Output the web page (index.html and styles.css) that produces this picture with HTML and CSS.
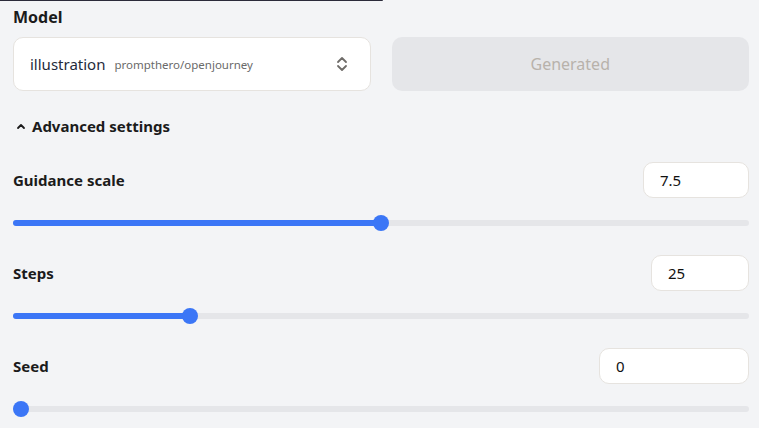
FILE: index.html
```html
<html>

<head>
    <link rel="stylesheet" href="styles.css">
</head>

<body>
    <div class="topEdge"></div>
    <div class="panel">
        <div class="label modelLabel">Model</div>
        <div class="modelRow">
            <div class="modelSelect">
                <span class="modelName">illustration</span>
                <span class="modelRepo">prompthero/openjourney</span>
                <svg class="updown" width="12" height="18" viewBox="0 0 12 18">
                    <path d="M2 7 L6 3 L10 7" fill="none" stroke="#6f6c69" stroke-width="1.8" stroke-linecap="round" stroke-linejoin="round"/>
                    <path d="M2 11 L6 15 L10 11" fill="none" stroke="#6f6c69" stroke-width="1.8" stroke-linecap="round" stroke-linejoin="round"/>
                </svg>
            </div>
            <button class="generateButton" disabled>Generated</button>
        </div>

        <div class="advanced">
            <svg class="caret" width="10" height="8" viewBox="0 0 10 8">
                <path d="M2 6 L5 3 L8 6" fill="none" stroke="#1b1b1b" stroke-width="1.8" stroke-linecap="round" stroke-linejoin="round"/>
            </svg>
            <span>Advanced settings</span>
        </div>

        <div class="setting">
            <div class="settingHead">
                <div class="label">Guidance scale</div>
                <div class="numberBox guidanceBox">7.5</div>
            </div>
            <div class="slider">
                <div class="track"></div>
                <div class="fill" style="width: 368px;"></div>
                <div class="thumb" style="left: 360px;"></div>
            </div>
        </div>

        <div class="setting">
            <div class="settingHead">
                <div class="label">Steps</div>
                <div class="numberBox stepsBox">25</div>
            </div>
            <div class="slider">
                <div class="track"></div>
                <div class="fill" style="width: 177px;"></div>
                <div class="thumb" style="left: 169px;"></div>
            </div>
        </div>

        <div class="setting">
            <div class="settingHead">
                <div class="label">Seed</div>
                <div class="numberBox seedBox">0</div>
            </div>
            <div class="slider">
                <div class="track"></div>
                <div class="thumb" style="left: 0px;"></div>
            </div>
        </div>
    </div>
</body>
</html>
```

FILE: styles.css
```css
body {
    margin: 0;
    background-color: #f3f4f6;
    font-family: "Noto Sans", "Open Sans", sans-serif;
    color: #1b1b1b;
}

.topEdge {
    height: 1px;
    width: 383px;
    background-color: #2b2b3a;
    border-bottom-right-radius: 2px;
}

.panel {
    padding: 0 10px 0 13px;
}

.label {
    font-size: 15px;
    font-weight: 700;
    line-height: 22px;
}

.modelLabel {
    margin-top: 4px;
    font-size: 16px;
    line-height: 24px;
}

.modelRow {
    display: grid;
    grid-template-columns: 1fr 1fr;
    gap: 21px;
    margin-top: 8px;
}

.modelSelect {
    min-width: 0;
    height: 52px;
    display: flex;
    align-items: center;
    padding: 0 22px 0 16px;
    background-color: #ffffff;
    border: 1px solid #e6e3df;
    border-radius: 10px;
}

.modelName {
    font-size: 15px;
    color: #1f2b3b;
}

.modelRepo {
    margin-left: 9px;
    font-size: 11.5px;
    color: #6a6a6a;
}

.updown {
    margin-left: auto;
}

.generateButton {
    min-width: 0;
    height: 54px;
    border: none;
    border-radius: 10px;
    background-color: #e5e6e9;
    color: #b8b2ab;
    font-family: "Noto Sans", "Open Sans", sans-serif;
    font-size: 16px;
}

.advanced {
    display: flex;
    align-items: center;
    gap: 6px;
    margin-top: 23px;
    padding-left: 3px;
    font-size: 15px;
    font-weight: 700;
    line-height: 24px;
}

.setting {
    margin-top: 24px;
}

.setting:first-of-type {
    margin-top: 25px;
}

.settingHead {
    display: flex;
    justify-content: space-between;
    align-items: center;
}

.numberBox {
    box-sizing: border-box;
    height: 36px;
    line-height: 34px;
    padding-left: 16px;
    background-color: #ffffff;
    border: 1px solid #e6e3df;
    border-radius: 10px;
    font-size: 15px;
    color: #111111;
}

.guidanceBox {
    width: 106px;
}

.stepsBox {
    width: 98px;
}

.seedBox {
    width: 150px;
}

.slider {
    position: relative;
    height: 16px;
    margin-top: 17px;
}

.track {
    position: absolute;
    top: 5px;
    left: 0;
    right: 0;
    height: 6px;
    border-radius: 3px;
    background-color: #e5e6e9;
}

.fill {
    position: absolute;
    top: 5px;
    left: 0;
    height: 6px;
    border-radius: 3px;
    background-color: #3b76f6;
}

.thumb {
    position: absolute;
    top: 0;
    width: 16px;
    height: 16px;
    border-radius: 50%;
    background-color: #3b76f6;
}
```
